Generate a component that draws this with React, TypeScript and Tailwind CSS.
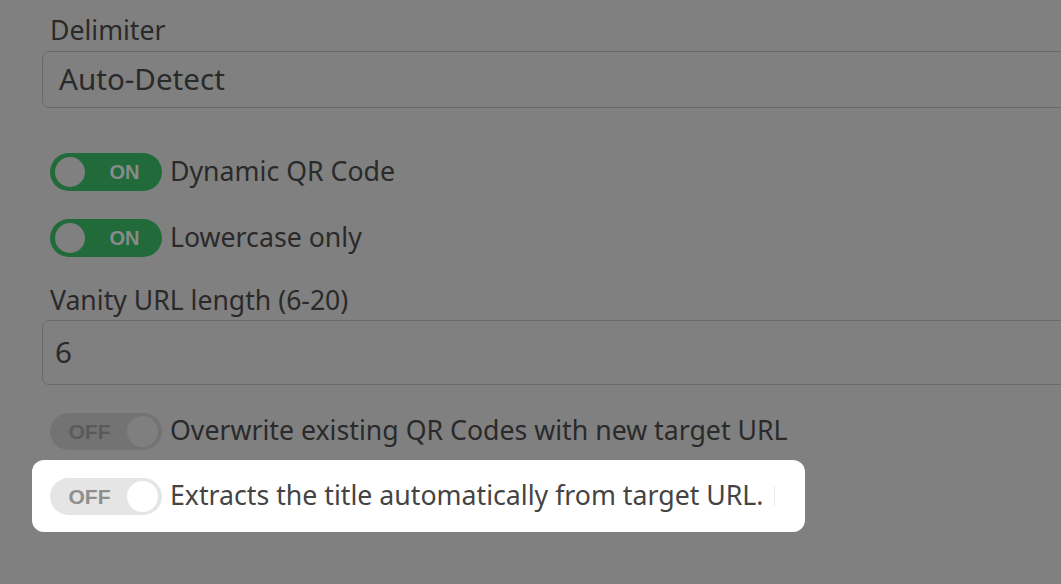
import React from "react";

function Toggle({ on, bright }: { on: boolean; bright?: boolean }) {
  if (on) {
    return (
      <div className="relative flex h-[38px] w-[112px] shrink-0 items-center rounded-full bg-[#216b3b]">
        <div className="ml-[5px] h-[30px] w-[30px] rounded-full bg-[#808080]" />
        <span className="flex-1 pl-[2px] text-center text-[20px] font-bold leading-none text-[#8a8a8a] font-['Liberation_Sans',Arial,sans-serif]">
          ON
        </span>
      </div>
    );
  }
  return (
    <div
      className={
        "flex h-[37px] w-[112px] shrink-0 items-center rounded-full " +
        (bright ? "bg-[#e5e5e5]" : "bg-[#737373]")
      }
    >
      <span
        className={
          "flex-1 pl-[2px] text-center text-[21px] font-bold leading-none font-['Liberation_Sans',Arial,sans-serif] " +
          (bright ? "text-[#8e8e8e]" : "text-[#5a5a5a]")
        }
      >
        OFF
      </span>
      <div
        className={
          "mr-[4px] h-[31px] w-[31px] rounded-full " +
          (bright ? "bg-white" : "bg-[#7f7f7f]")
        }
      />
    </div>
  );
}

export default function App() {
  return (
    <div className="h-[584px] w-[1061px] overflow-hidden bg-[#808080] font-['Noto_Sans',sans-serif] text-[#2a2a2a]">
      <div className="w-[1100px] pl-[42px] pt-[14px]">
        <div className="pl-[8px] text-[26.6px] leading-[32px]">Delimiter</div>
        <div className="mt-[5px] flex h-[57px] items-center rounded-[7px] border border-[#6a6a6a] pl-[16px] text-[29.6px]">
          Auto-Detect
        </div>

        <div className="mt-[45px] flex items-center gap-[8px] pl-[8px] text-[26.7px] leading-[36px]">
          <Toggle on />
          <span className="-mt-[3px]">Dynamic QR Code</span>
        </div>
        <div className="mt-[28px] flex items-center gap-[8px] pl-[8px] text-[26.7px] leading-[36px]">
          <Toggle on />
          <span className="-mt-[3px]">Lowercase only</span>
        </div>

        <div className="mt-[27px] pl-[8px] text-[26.6px] leading-[32px]">Vanity URL length (6-20)</div>
        <div className="mt-[4px] flex h-[65px] items-center rounded-[7px] border border-[#6a6a6a] pl-[12px] text-[29.6px]">
          6
        </div>

        <div className="mt-[28px] flex items-center gap-[8px] pl-[8px] text-[26.7px] leading-[36px]">
          <Toggle on={false} />
          <span className="-mt-[3px]">Overwrite existing QR Codes with new target URL</span>
        </div>

        <div className="-ml-[10px] mt-[10px] flex h-[72px] w-[773px] items-center gap-[8px] rounded-[12px] bg-white pl-[18px] text-[26.7px] leading-[36px] text-[#444444]">
          <Toggle on={false} bright />
          <span className="-mt-[3px]">Extracts the title automatically from target URL.</span>
          <span className="ml-[2px] h-[20px] w-px bg-[#e8e8e8]" />
        </div>
      </div>
    </div>
  );
}
